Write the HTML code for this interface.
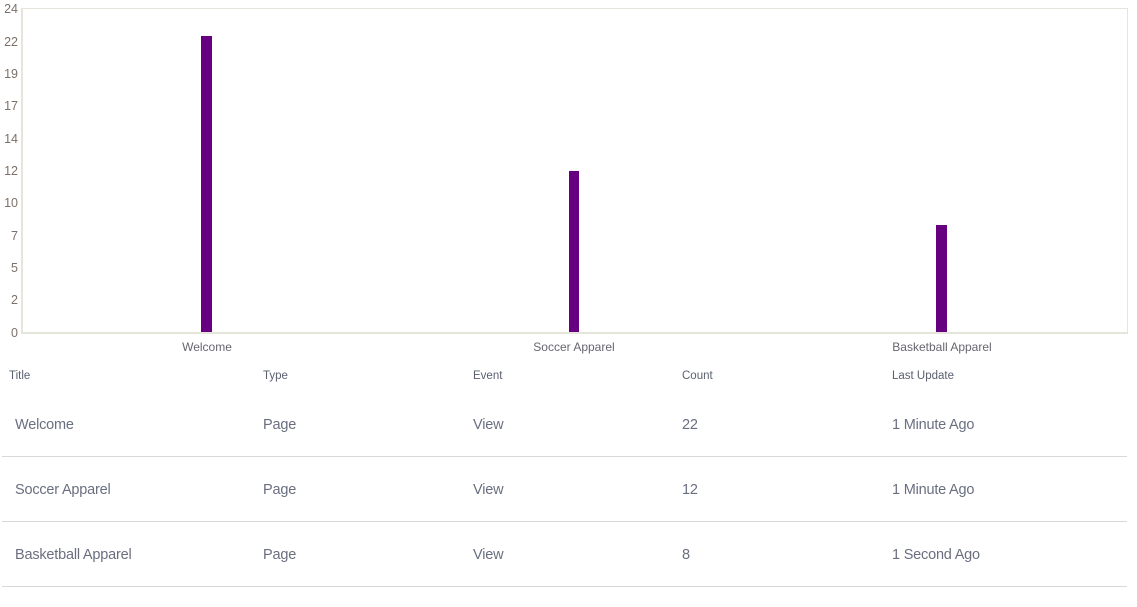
<!DOCTYPE html>
<html><head><style>
body{margin:0;width:1137px;height:607px;background:#fff;font-family:"Liberation Sans",sans-serif;position:relative;overflow:hidden}
.a{position:absolute}
.yl{position:absolute;right:1119px;font-size:12.5px;color:#7d7068;transform:translateY(-50%)}
.xl{position:absolute;font-size:12px;color:#666670;transform:translateX(-50%);top:340px}
.h{position:absolute;top:370px;font-size:11.5px;color:#5a5f70}
.c{position:absolute;font-size:14.5px;color:#6a6f80;letter-spacing:-0.2px}
.sep{position:absolute;left:2px;width:1125px;height:1px;background:#d8d8d8}
</style></head><body>
<div class="a" style="left:21px;top:8px;width:1104px;height:323px;border:2px solid #e6e5dc;border-top-width:1px;border-right-width:1px"></div>
<div class="yl" style="top:9px">24</div>
<div class="yl" style="top:42px">22</div>
<div class="yl" style="top:74px">19</div>
<div class="yl" style="top:106px">17</div>
<div class="yl" style="top:139px">14</div>
<div class="yl" style="top:171px">12</div>
<div class="yl" style="top:203px">10</div>
<div class="yl" style="top:236px">7</div>
<div class="yl" style="top:268px">5</div>
<div class="yl" style="top:300px">2</div>
<div class="yl" style="top:333px">0</div>
<div class="a" style="left:201px;top:36px;width:11px;height:296px;background:#660080"></div>
<div class="a" style="left:569px;top:171px;width:10px;height:161px;background:#660080"></div>
<div class="a" style="left:936px;top:225px;width:11px;height:107px;background:#660080"></div>
<div class="xl" style="left:207px">Welcome</div>
<div class="xl" style="left:574px">Soccer Apparel</div>
<div class="xl" style="left:942px">Basketball Apparel</div>
<div class="h" style="left:9px">Title</div>
<div class="h" style="left:263px">Type</div>
<div class="h" style="left:473px">Event</div>
<div class="h" style="left:682px">Count</div>
<div class="h" style="left:892px">Last Update</div>
<div class="c" style="left:15px;top:417px">Welcome</div><div class="c" style="left:263px;top:417px">Page</div><div class="c" style="left:473px;top:417px">View</div><div class="c" style="left:682px;top:417px">22</div><div class="c" style="left:892px;top:417px">1 Minute Ago</div>
<div class="sep" style="top:456px"></div>
<div class="c" style="left:15px;top:482px">Soccer Apparel</div><div class="c" style="left:263px;top:482px">Page</div><div class="c" style="left:473px;top:482px">View</div><div class="c" style="left:682px;top:482px">12</div><div class="c" style="left:892px;top:482px">1 Minute Ago</div>
<div class="sep" style="top:521px"></div>
<div class="c" style="left:15px;top:547px">Basketball Apparel</div><div class="c" style="left:263px;top:547px">Page</div><div class="c" style="left:473px;top:547px">View</div><div class="c" style="left:682px;top:547px">8</div><div class="c" style="left:892px;top:547px">1 Second Ago</div>
<div class="sep" style="top:586px"></div>
</body></html>
